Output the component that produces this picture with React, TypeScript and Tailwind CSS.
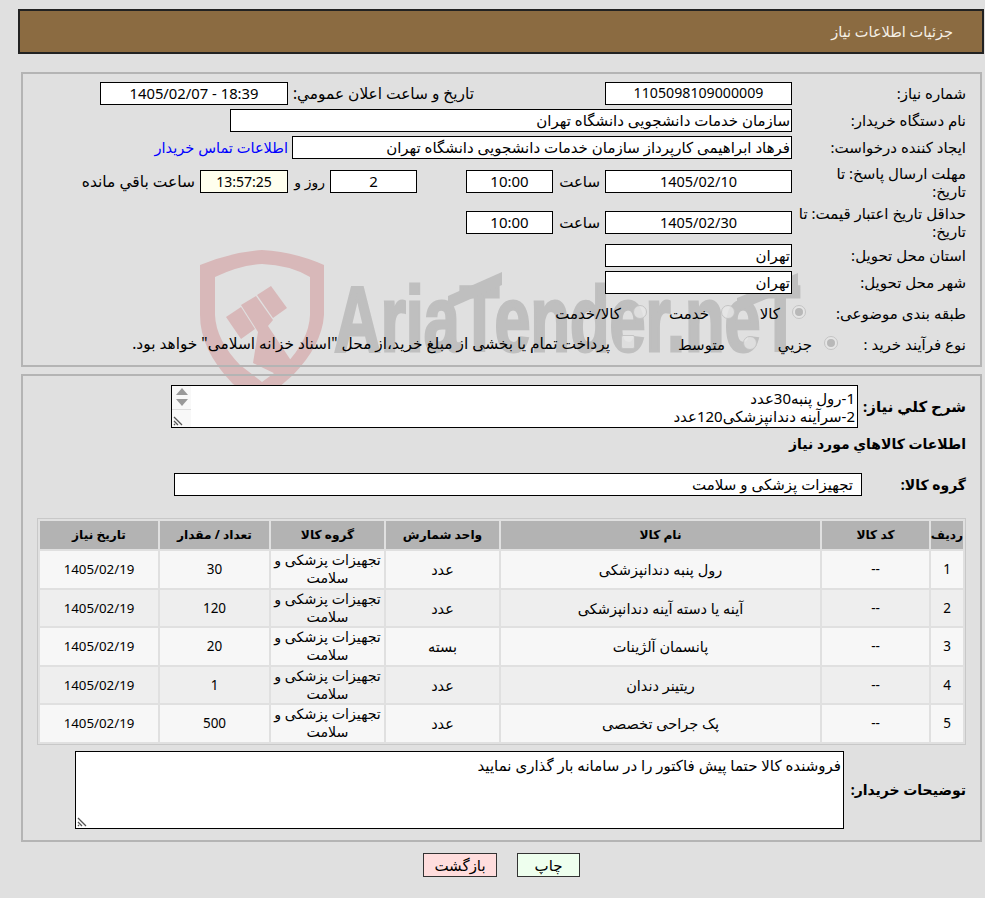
import React from 'react';

const rows = [
  { id: '1', name: 'رول پنبه دندانپزشکی', unit: 'عدد', qty: '30' },
  { id: '2', name: 'آینه یا دسته آینه دندانپزشکی', unit: 'عدد', qty: '120' },
  { id: '3', name: 'پانسمان آلژینات', unit: 'بسته', qty: '20' },
  { id: '4', name: 'ریتینر دندان', unit: 'عدد', qty: '1' },
  { id: '5', name: 'پک جراحی تخصصی', unit: 'عدد', qty: '500' },
];

const field = 'h-[23px] border border-black bg-white flex items-center shrink-0 leading-none';

const Field: React.FC<{ className?: string; center?: boolean; children: React.ReactNode }> = ({ className, center, children }) => (
  <div className={`${field} ${center ? 'justify-center' : 'pr-px'} ${className ?? ''}`}>{children}</div>
);

const Radio: React.FC<{ checked?: boolean }> = ({ checked }) => (
  <span className="w-[14px] h-[14px] -mt-[3px] rounded-full border border-[#c4c4c4] bg-[#e6e6e6]/80 flex items-center justify-center shrink-0">
    {checked && <span className="w-[8px] h-[8px] rounded-full bg-[#b8b8b8]" />}
  </span>
);

const Resizer = () => (
  <svg className="absolute left-[1px] bottom-[1px]" width="12" height="12" viewBox="0 0 12 12">
    <path d="M1 3 L9 11 M1 7 L5 11 M1 10 L2 11" stroke="#555" strokeWidth="1.3" fill="none" />
  </svg>
);

const Watermark = () => (
  <svg className="absolute left-0 top-0 pointer-events-none" width="985" height="440" viewBox="0 0 985 440" direction="ltr">
    <path
      fillRule="evenodd"
      fill="#d8b8b9"
      d="M200 265 Q232 252 262 250 Q295 252 324 265 L324 315 Q322 345 293 375 L262 402 L233 384 Q200 350 200 315 Z M215 277 L215 315 Q216 340 240 365 L262 382 L285 365 Q309 340 310 315 L310 277 Q290 265 262 264 Q240 265 215 277 Z"
    />
    <polygon fill="#d8b8b9" points="226,317 241,307 255,329 241,339" />
    <polygon fill="#d8b8b9" points="241,305 256,296 273,320 268,326 296,368 284,378 253,363 258,332" />
    <polygon fill="#d8b8b9" points="257,295 271,286 287,308 273,318" />
    <text
      x="334"
      y="351"
      direction="ltr"
      textAnchor="start"
      fill="#bfbfbf"
      stroke="#bfbfbf"
      strokeWidth="3"
      fontFamily="'Liberation Sans', sans-serif"
      fontWeight="700"
      fontSize="92"
      textLength="466"
      lengthAdjust="spacingAndGlyphs"
    >
      AriaTender.neT
    </text>
    <polygon fill="#bfbfbf" points="448,296 502,272 502,285 448,309" />
    <polygon fill="#bfbfbf" points="737,298 798,273 798,286 737,311" />
  </svg>
);

export default function App() {
  return (
    <div
      dir="rtl"
      className="relative w-[985px] h-[898px] overflow-hidden bg-[#e0e0e0] text-black text-[15px] pt-[9px] font-['Noto_Sans','DejaVu_Sans',sans-serif]"
    >
      <Watermark />

      <div className="relative">
        {/* Header */}
        <div className="h-[45px] mr-px w-[966px] border-2 border-[#222] bg-[#8b6b41] text-[14.5px] text-[#f5f0e6] flex items-center pr-[29px]">
          جزئیات اطلاعات نیاز
        </div>

        {/* Details */}
        <div className="mt-[18px] mr-[3px] w-[961px] h-[295px] border-2 border-[#b4b4b4] pt-[6px] pr-[14px]">
          <div className="flex items-center h-[27px]">
            <div className="w-[174px]">شماره نیاز:</div>
            <Field center className="w-[187px] text-[14.2px]">1105098109000009</Field>
            <div className="w-[131px] shrink-0" />
            <div className="w-[186px] shrink-0 whitespace-nowrap text-[15.4px]">تاریخ و ساعت اعلان عمومي:</div>
            <Field center className="w-[188px] text-[14.8px]">18:39 - 1405/02/07</Field>
          </div>
          <div className="flex items-center h-[27px]">
            <div className="w-[174px]">نام دستگاه خریدار:</div>
            <Field className="w-[562px]">سازمان خدمات دانشجویی دانشگاه تهران</Field>
          </div>
          <div className="flex items-center h-[27px]">
            <div className="w-[174px]">ایجاد کننده درخواست:</div>
            <Field className="w-[500px]">فرهاد ابراهیمی کارپرداز سازمان خدمات دانشجویی دانشگاه تهران</Field>
            <a className="mr-[4px] text-[14.6px] text-[#0000ff] whitespace-nowrap">اطلاعات تماس خریدار</a>
          </div>
          <div className="flex items-center h-[41px]">
            <div className="w-[174px] leading-[18px]">مهلت ارسال پاسخ: تا<br />تاریخ:</div>
            <Field center className="w-[187px] text-[14.5px]">1405/02/10</Field>
            <div className="w-[52px] pr-[5px] shrink-0">ساعت</div>
            <Field center className="w-[87px] text-[15px]">10:00</Field>
            <div className="w-[49px] shrink-0" />
            <Field center className="w-[87px]">2</Field>
            <div className="w-[42px] pr-[5px] shrink-0 text-[14px]">روز و</div>
            <Field center className="w-[88px] text-[14px] !bg-[#ffffee]">13:57:25</Field>
            <div className="pr-[5px] text-[15.5px] whitespace-nowrap">ساعت باقي مانده</div>
          </div>
          <div className="flex items-center h-[40px]">
            <div className="w-[174px] leading-[18px]">حداقل تاریخ اعتبار قیمت: تا<br />تاریخ:</div>
            <Field center className="w-[187px] text-[14.5px]">1405/02/30</Field>
            <div className="w-[52px] pr-[5px] shrink-0">ساعت</div>
            <Field center className="w-[87px] text-[15px]">10:00</Field>
          </div>
          <div className="flex items-center h-[27px]">
            <div className="w-[174px]">استان محل تحویل:</div>
            <Field className="w-[187px]">تهران</Field>
          </div>
          <div className="flex items-center h-[27px]">
            <div className="w-[174px]">شهر محل تحویل:</div>
            <Field className="w-[187px]">تهران</Field>
          </div>
          <div className="flex items-center h-[34px]">
            <div className="w-[160px] shrink-0">طبقه بندی موضوعی:</div>
            <div className="w-[71px] flex items-center gap-[12px]"><Radio checked />کالا</div>
            <div className="w-[88px] flex items-center gap-[12px]"><Radio />خدمت</div>
            <div className="flex items-center gap-[12px]"><Radio />کالا/خدمت</div>
          </div>
          <div className="flex items-center h-[28px]">
            <div className="w-[128px] shrink-0">نوع فرآیند خرید :</div>
            <div className="w-[81px] flex items-center gap-[12px]"><Radio checked />جزيي</div>
            <div className="w-[122px] flex items-center gap-[18px]"><Radio />متوسط</div>
            <div className="flex items-center gap-[11px] whitespace-nowrap text-[15.4px]">
              <span className="w-[14px] h-[14px] -mt-[3px] rounded-[2px] border border-[#c4c4c4] bg-[#e6e6e6]/80 shrink-0" />
              پرداخت تمام یا بخشی از مبلغ خرید،از محل "اسناد خزانه اسلامی" خواهد بود.
            </div>
          </div>
        </div>

        {/* Goods */}
        <div className="mt-[7px] mr-[3px] w-[961px] h-[468px] border-2 border-[#b4b4b4] pt-[9px] pr-[14px]">
          <div className="flex items-center h-[43px]">
            <div className="w-[108px] shrink-0 font-bold">شرح کلي نياز:</div>
            <div className="relative w-[687px] h-[43px] border border-black bg-white overflow-hidden pr-[2px] leading-[18px] pt-[3px]">
              <div>1-رول پنبه30عدد</div>
              <div>2-سرآینه دندانپزشکی120عدد</div>
              <div className="absolute left-0 top-0 w-[19px] h-full bg-[#f8f8f8]">
                <div className="mx-auto mt-[2px] w-0 h-0 border-x-[6px] border-x-transparent border-b-[7px] border-b-[#999]" />
                <div className="mx-auto mt-[4px] w-0 h-0 border-x-[6px] border-x-transparent border-t-[7px] border-t-[#999]" />
                <div className="mt-[3px] border-t border-[#ddd]" />
                <Resizer />
              </div>
            </div>
          </div>
          <div className="h-[30px] flex items-center text-[14px] font-bold">اطلاعات کالاهاي مورد نياز</div>
          <div className="flex items-center h-[23px] mt-[15px]">
            <div className="w-[104px] shrink-0 text-[14px] font-bold">گروه کالا:</div>
            <div className={`${field} w-[688px] pr-[8px]`}>تجهیزات پزشکی و سلامت</div>
          </div>

          <table className="mt-[22px] w-[927px] table-fixed border-separate border-spacing-[2px] border border-[#c8c8c8] text-center text-[14.5px] leading-[18px]">
            <colgroup>
              <col className="w-[32px]" />
              <col className="w-[107px]" />
              <col className="w-[319px]" />
              <col className="w-[113px]" />
              <col className="w-[113px]" />
              <col className="w-[109px]" />
              <col className="w-[118px]" />
            </colgroup>
            <thead>
              <tr className="h-[28px] bg-[#b3b3b3] text-[12.2px] font-bold">
                <th>ردیف</th>
                <th>کد کالا</th>
                <th>نام کالا</th>
                <th>واحد شمارش</th>
                <th>گروه کالا</th>
                <th>تعداد / مقدار</th>
                <th>تاریخ نیاز</th>
              </tr>
            </thead>
            <tbody>
              {rows.map((row, i) => (
                <tr key={row.id} className={`h-[36.5px] ${i % 2 === 0 ? 'bg-[#f7f7f7]' : 'bg-[#eeeeee]'}`}>
                  <td className="text-[13.5px]">{row.id}</td>
                  <td className="text-[13.5px]">--</td>
                  <td>{row.name}</td>
                  <td>{row.unit}</td>
                  <td className="text-[14.2px]">تجهیزات پزشکی و سلامت</td>
                  <td className="text-[13.5px]">{row.qty}</td>
                  <td className="text-[13.3px]">1405/02/19</td>
                </tr>
              ))}
            </tbody>
          </table>

          <div className="flex items-center mt-[6px]">
            <div className="w-[122px] shrink-0 text-[14px] font-bold">توضیحات خریدار:</div>
            <div className="relative w-[769px] h-[78px] border border-black bg-white pr-[2px] pt-[2px]">
              فروشنده کالا حتما پیش فاکتور را در سامانه بار گذاری نمایید
              <Resizer />
            </div>
          </div>
        </div>

        {/* Actions */}
        <div className="flex justify-center gap-[20px] mt-[11px] pl-[18px]">
          <button className="w-[63px] h-[24px] border border-[#333] bg-[#eeffee] leading-none">چاپ</button>
          <button className="w-[74px] h-[24px] border border-[#333] bg-[#ffdddd] leading-none">بازگشت</button>
        </div>
      </div>
    </div>
  );
}
